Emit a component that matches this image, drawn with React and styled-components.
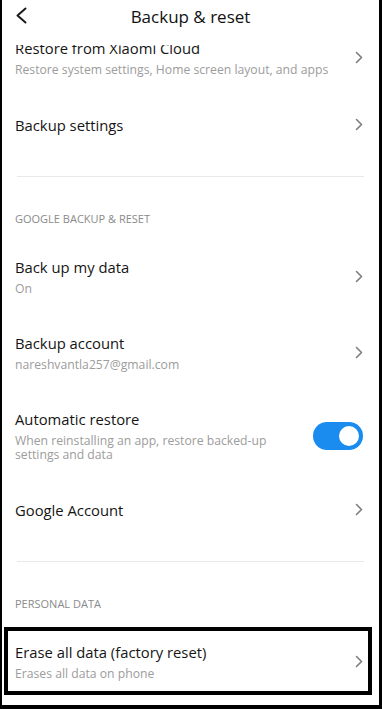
import React from 'react';
import styled, { createGlobalStyle } from 'styled-components';

const GlobalStyle = createGlobalStyle`
  html, body {
    margin: 0;
    padding: 0;
    background: #ffffff;
  }
  body {
    font-family: "Open Sans", "Noto Sans", "Liberation Sans", sans-serif;
    -webkit-font-smoothing: antialiased;
  }
`;

const Screen = styled.div`
  width: 382px;
  height: 709px;
  box-sizing: border-box;
  border-left: 2px solid #000;
  border-right: 3px solid #000;
  border-bottom: 4px solid #000;
  background: #fff;
  display: flex;
  flex-direction: column;
  overflow: hidden;
`;

const Header = styled.header`
  flex-shrink: 0;
  height: 45px;
  display: grid;
  grid-template-columns: 44px 1fr 44px;
  align-items: start;
  background: #fff;
`;

const BackButton = styled.button`
  border: none;
  background: none;
  padding: 0;
  margin: 7px 0 0 13px;
  width: 12px;
  height: 17px;
  display: flex;
  cursor: pointer;
`;

const Title = styled.h1`
  margin: 0;
  padding-top: 5px;
  font-size: 17px;
  line-height: 24px;
  font-weight: 400;
  color: #111;
  text-align: center;
`;

const Body = styled.div`
  flex: 1;
  overflow: hidden;
`;

// content is scrolled a little: the first row slides under the header
const List = styled.div`
  margin-top: ${p => -p.$scroll}px;
`;

const Row = styled.div`
  position: relative;
  display: flex;
  align-items: center;
  min-height: 58px;
  box-sizing: border-box;
  padding: 18px 16px 19px 13px;
  cursor: pointer;

  ${p =>
    p.$highlighted &&
    `
    &::after {
      content: '';
      position: absolute;
      top: 3px;
      bottom: 5px;
      left: 2px;
      right: 7px;
      border: 4px solid #000;
      pointer-events: none;
    }
  `}
`;

const RowText = styled.div`
  flex: 1;
  min-width: 0;
  padding-right: ${p => (p.$wide ? '40px' : '12px')};
`;

const RowTitle = styled.div`
  font-size: 14.8px;
  line-height: 20px;
  color: #151515;
`;

const RowSub = styled.div`
  margin-top: 5px;
  font-size: 12.2px;
  line-height: 14px;
  color: #9c9c9c;
`;

const Divider = styled.div`
  height: 1px;
  margin: 22px 15px 0;
  background: #e9e9e9;
`;

const SectionHeader = styled.div`
  padding: 34px 15px 12px 13px;
  font-size: 11px;
  line-height: 16px;
  color: #8a8a8a;
  text-transform: uppercase;
`;

const Toggle = styled.div`
  flex-shrink: 0;
  width: 50px;
  height: 28px;
  border-radius: 14px;
  background: ${p => (p.$on ? '#1a8cf0' : '#d6d6d6')};
  display: flex;
  align-items: center;
  justify-content: ${p => (p.$on ? 'flex-end' : 'flex-start')};
  padding: 0 4px;
  box-sizing: border-box;
`;

const Knob = styled.div`
  width: 20px;
  height: 20px;
  border-radius: 50%;
  background: #fff;
`;

const Chevron = () => (
  <svg width="8" height="13" viewBox="0 0 8 13" fill="none">
    <path
      d="M1.5 1.5 L6.5 6.5 L1.5 11.5"
      stroke="#7d7d7d"
      strokeWidth="1.6"
      strokeLinecap="round"
      strokeLinejoin="round"
    />
  </svg>
);

const BackIcon = () => (
  <svg width="12" height="17" viewBox="0 0 12 17" fill="none">
    <path
      d="M10.5 1.5 L2.5 8.5 L10.5 15.5"
      stroke="#1a1a1a"
      strokeWidth="2"
      strokeLinecap="round"
      strokeLinejoin="round"
    />
  </svg>
);

const SettingRow = ({ title, sub, toggle, highlighted }) => (
  <Row $highlighted={highlighted}>
    <RowText $wide={!!toggle}>
      <RowTitle>{title}</RowTitle>
      {sub && <RowSub>{sub}</RowSub>}
    </RowText>
    {toggle ? (
      <Toggle $on>
        <Knob />
      </Toggle>
    ) : (
      <Chevron />
    )}
  </Row>
);

export default function App() {
  return (
    <>
      <GlobalStyle />
      <Screen>
        <Header>
          <BackButton aria-label="Back">
            <BackIcon />
          </BackButton>
          <Title>Backup &amp; reset</Title>
          <div />
        </Header>
        <Body>
          <List $scroll={25}>
            <SettingRow
              title="Restore from Xiaomi Cloud"
              sub="Restore system settings, Home screen layout, and apps"
            />
            <SettingRow title="Backup settings" />
            <Divider />
            <SectionHeader>Google backup &amp; reset</SectionHeader>
            <SettingRow title="Back up my data" sub="On" />
            <SettingRow title="Backup account" sub="nareshvantla257@gmail.com" />
            <SettingRow
              title="Automatic restore"
              sub="When reinstalling an app, restore backed-up settings and data"
              toggle
            />
            <SettingRow title="Google Account" />
            <Divider />
            <SectionHeader>Personal data</SectionHeader>
            <SettingRow
              title="Erase all data (factory reset)"
              sub="Erases all data on phone"
              highlighted
            />
          </List>
        </Body>
      </Screen>
    </>
  );
}
